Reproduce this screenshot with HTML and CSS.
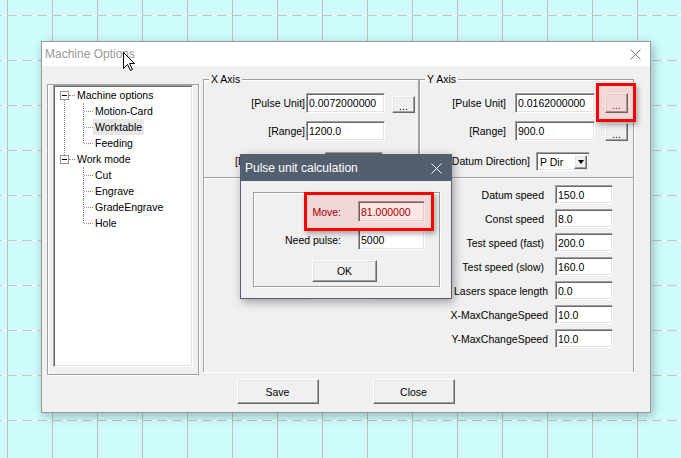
FILE: index.html
```html
<!DOCTYPE html>
<html lang="en">
<head>
    <meta charset="UTF-8">
    <title>Machine Options</title>
    <link rel="stylesheet" href="styles.css">
</head>
<body>
<div class="desktop">
    <svg class="grid" width="681" height="458">
        <defs>
            <pattern id="cell" x="7" y="15" width="45" height="45" patternUnits="userSpaceOnUse">
                <rect width="45" height="45" fill="#cefcfc"/>
                <line x1="0" y1="0.5" x2="45" y2="0.5" stroke="#ffffff"/>
                <line x1="0" y1="0.5" x2="45" y2="0.5" stroke="#c4c4c4" stroke-dasharray="10 5"/>
                <line x1="0.5" y1="0" x2="0.5" y2="45" stroke="#c0c0c0"/>
            </pattern>
        </defs>
        <rect width="681" height="458" fill="url(#cell)"/>
    </svg>

    <!-- main dialog -->
    <div class="window options">
        <div class="caption">
            <span class="caption_text">Machine Options</span>
            <svg class="caption_close" width="11" height="11"><path d="M0.5 0.5 L10.5 10.5 M10.5 0.5 L0.5 10.5"/></svg>
        </div>
        <div class="client">
            <div class="panes">
                <div class="tree_frame">
                    <div class="tree">
                        <div class="node node_open">
                            <div class="row"><span class="twisty"></span><span class="stub"></span><span class="label">Machine options</span></div>
                            <div class="row"><span class="branch"></span><span class="label">Motion-Card</span></div>
                            <div class="row"><span class="branch"></span><span class="label sel">Worktable</span></div>
                            <div class="row"><span class="branch branch_last"></span><span class="label">Feeding</span></div>
                        </div>
                        <div class="node">
                            <div class="row"><span class="twisty"></span><span class="stub"></span><span class="label">Work mode</span></div>
                            <div class="row"><span class="branch"></span><span class="label">Cut</span></div>
                            <div class="row"><span class="branch"></span><span class="label">Engrave</span></div>
                            <div class="row"><span class="branch"></span><span class="label">GradeEngrave</span></div>
                            <div class="row"><span class="branch branch_last"></span><span class="label">Hole</span></div>
                        </div>
                    </div>
                </div>

                <div class="settings">
                    <div class="group axis axis_x">
                        <div class="legend">X Axis</div>
                        <div class="field first">
                            <span class="lbl">[Pulse Unit]</span>
                            <span class="edit">0.0072000000</span>
                            <span class="btn dots">...</span>
                        </div>
                        <div class="field second">
                            <span class="lbl">[Range]</span>
                            <span class="edit">1200.0</span>
                        </div>
                        <div class="field third">
                            <span class="lbl_clip">[Datum Direction]</span>
                            <span class="combo"><span class="combo_text"></span><span class="btn combo_btn"><i class="arrow"></i></span></span>
                        </div>
                    </div>
                    <div class="group axis axis_y">
                        <div class="legend">Y Axis</div>
                        <div class="field first">
                            <span class="lbl">[Pulse Unit]</span>
                            <span class="edit">0.0162000000</span>
                            <span class="btn dots hl_text">...</span>
                        </div>
                        <div class="field second">
                            <span class="lbl">[Range]</span>
                            <span class="edit">900.0</span>
                            <span class="btn dots">...</span>
                        </div>
                        <div class="field third">
                            <span class="lbl">[Datum Direction]</span>
                            <span class="combo"><span class="combo_text">P Dir</span><span class="btn combo_btn"><i class="arrow"></i></span></span>
                        </div>
                    </div>
                    <div class="group speeds">
                        <div class="speeds_left">
                            <span class="edit"></span>
                        </div>
                        <div class="speeds_right">
                            <span class="lbl">Datum speed</span><span class="edit">150.0</span>
                            <span class="lbl">Const speed</span><span class="edit">8.0</span>
                            <span class="lbl">Test speed (fast)</span><span class="edit">200.0</span>
                            <span class="lbl">Test speed (slow)</span><span class="edit">160.0</span>
                            <span class="lbl wide">Lasers space length</span><span class="edit">0.0</span>
                            <span class="lbl wide">X-MaxChangeSpeed</span><span class="edit">10.0</span>
                            <span class="lbl wide">Y-MaxChangeSpeed</span><span class="edit">10.0</span>
                        </div>
                    </div>
                </div>
            </div>
            <div class="actions">
                <span class="btn push">Save</span>
                <span class="btn push">Close</span>
            </div>
        </div>
        <div class="mark mark_y"></div>
    </div>

    <!-- pulse unit calculation -->
    <div class="window calc">
        <div class="calc_caption">
            <span>Pulse unit calculation</span>
            <svg class="calc_close" width="11" height="11"><path d="M0.5 0.5 L10.5 10.5 M10.5 0.5 L0.5 10.5"/></svg>
        </div>
        <div class="calc_body">
            <div class="calc_frame">
                <div class="calc_row">
                    <span class="lbl hl_text">Move:</span>
                    <span class="edit hl_text">81.000000</span>
                </div>
                <div class="calc_row second">
                    <span class="lbl">Need pulse:</span>
                    <span class="edit">5000</span>
                </div>
                <span class="btn ok">OK</span>
            </div>
        </div>
        <div class="mark mark_move"></div>
    </div>

    <svg class="cursor" width="13" height="20"><path d="M0.5 0.5 V16.5 L4.5 12.5 L7.5 18.5 L9.5 17.5 L6.5 11.5 H11.5 Z"/></svg>
</div>
</body>
</html>
```

FILE: styles.css
```css
*{
    margin: 0;
    padding: 0;
    box-sizing: border-box;
}
body{
    width: 681px;
    height: 458px;
    overflow: hidden;
    font-family: "Liberation Sans", Arial, sans-serif;
    font-size: 10.5px;
    color: #000;
}
.desktop{
    position: relative;
    width: 681px;
    height: 458px;
}
.grid{
    display: block;
}

/* windows */
.window{
    position: absolute;
    background: #f0f0f0;
}
.options{
    left: 41px;
    top: 41px;
    width: 610px;
    height: 372px;
    border: 1px solid #9a9a9a;
    box-shadow: 2px 3px 10px rgba(0,0,0,0.28);
}
.caption{
    height: 24px;
    background: #fff;
    display: flex;
    align-items: center;
    justify-content: space-between;
    padding: 0 9px 0 3px;
}
.caption_text{
    font-size: 12px;
    color: #999;
}
.caption_close path{
    stroke: #777;
    fill: none;
}
.client{
    height: 346px;
    padding: 13px 15px 0 5px;
}
.panes{
    display: flex;
    align-items: flex-start;
}

/* tree */
.tree_frame{
    width: 152px;
    height: 291px;
    margin-top: 5px;
    border: 1px solid #a0a0a0;
    box-shadow: inset 1px 1px #fff, 1px 1px #fff;
    padding: 0 5px 7px 5px;
}
.tree{
    height: 100%;
    background: #fff;
    border: 1px solid;
    border-color: #a0a0a0 #fff #fff #a0a0a0;
    box-shadow: inset 1px 1px #696969, inset -1px -1px #e3e3e3;
    padding: 1px 0 0 1px;
}
.node{
    position: relative;
}
.node_open::before{
    content: "";
    position: absolute;
    left: 9px;
    top: 8px;
    height: 64px;
    border-left: 1px dotted #888;
}
.row{
    height: 16px;
    display: flex;
    align-items: center;
}
.twisty{
    width: 9px;
    height: 9px;
    margin-left: 5px;
    border: 1px solid #919191;
    background: #fff;
    position: relative;
    z-index: 1;
}
.twisty::after{
    content: "";
    position: absolute;
    left: 1px;
    top: 3px;
    width: 5px;
    height: 1px;
    background: #000;
}
.stub{
    width: 6px;
    border-top: 1px dotted #888;
}
.label{
    line-height: 16px;
    padding: 0 2px;
    white-space: nowrap;
}
.label.sel{
    background: #e8e8e8;
}
.branch{
    width: 10px;
    height: 16px;
    margin-left: 28px;
    position: relative;
}
.branch::before{
    content: "";
    position: absolute;
    left: 0;
    top: 0;
    height: 16px;
    border-left: 1px dotted #888;
}
.branch_last::before{
    height: 8px;
}
.branch::after{
    content: "";
    position: absolute;
    left: 1px;
    top: 8px;
    width: 9px;
    border-top: 1px dotted #888;
}

/* settings groups */
.settings{
    margin-left: 4px;
    width: 431px;
    display: grid;
    grid-template-columns: 216px 215px;
}
.group{
    border: 1px solid #a0a0a0;
    box-shadow: inset 1px 1px #fff, 1px 1px #fff;
}
.axis{
    height: 98px;
    border-bottom: 0;
}
.speeds{
    grid-column: 1 / 3;
    height: 195px;
    border-bottom: 0;
    display: flex;
    padding: 7px 20px 0 0;
}
.legend{
    width: max-content;
    height: 13px;
    line-height: 13px;
    margin: -7px 0 0 5px;
    padding: 0 2px;
    background: #f0f0f0;
}
.field{
    display: flex;
    align-items: center;
    height: 20px;
}
.field.first{
    margin-top: 7px;
}
.field.second{
    margin-top: 8px;
}
.field.third{
    margin-top: 10px;
}
.lbl{
    text-align: right;
    white-space: nowrap;
}
/* label that sits under the calculation dialog: only its first glyph shows */
.lbl_clip{
    width: 36px;
    padding-left: 31px;
    overflow: hidden;
    white-space: nowrap;
    margin-right: 85px;
}
.edit{
    display: flex;
    align-items: center;
    height: 20px;
    background: #fff;
    border: 1px solid;
    border-color: #a0a0a0 #fff #fff #a0a0a0;
    box-shadow: inset 1px 1px #696969, inset -1px -1px #e3e3e3;
    padding: 0 2px;
    white-space: nowrap;
}
.btn{
    display: flex;
    align-items: center;
    justify-content: center;
    background: #f0f0f0;
    border: 1px solid;
    border-color: #fff #696969 #696969 #fff;
    box-shadow: inset -1px -1px #a0a0a0, inset 1px 1px #e3e3e3;
}
.dots{
    width: 23px;
    height: 20px;
    padding-top: 3px;
}
.axis_x .lbl{
    width: 101px;
}
.axis_x .edit{
    margin-left: 1px;
    width: 79px;
}
.axis_x .dots{
    margin-left: 7px;
    height: 17px;
    align-self: flex-end;
}
.axis_x .combo{
    width: 58px;
}
.axis_y .lbl{
    width: 86px;
}
.axis_y .edit{
    margin-left: 9px;
    width: 80px;
}
.axis_y .dots{
    margin-left: 10px;
}
.axis_y .second .dots{
    height: 18px;
    align-self: flex-end;
}
.axis_y .third .lbl{
    width: 110px;
}
.axis_y .combo{
    margin-left: 6px;
    width: 54px;
}
.combo{
    display: flex;
    height: 19px;
    background: #fff;
    border: 1px solid;
    border-color: #a0a0a0 #fff #fff #a0a0a0;
    box-shadow: inset 1px 1px #696969, inset -1px -1px #e3e3e3;
    padding: 2px 2px 1px 2px;
}
.combo_text{
    flex: 1;
    line-height: 14px;
    padding-left: 1px;
}
.combo_btn{
    width: 13px;
}
.arrow{
    width: 0;
    height: 0;
    border-left: 3.5px solid transparent;
    border-right: 3.5px solid transparent;
    border-top: 4px solid #000;
}
.speeds_left{
    width: 166px;
    padding: 96px 0 0 107px;
}
.speeds_left .edit{
    width: 59px;
    height: 19px;
}
.speeds_right{
    margin-left: auto;
    display: grid;
    grid-template-columns: auto 58px;
    grid-auto-rows: 19px;
    column-gap: 11px;
    row-gap: 5px;
    align-items: center;
}
.speeds_right .edit{
    height: 19px;
}
.speeds_right .lbl.wide{
    margin-right: -4px;
}
.actions{
    display: flex;
    justify-content: center;
    gap: 54px;
    margin-top: 4px;
    padding-left: 9px;
}
.push{
    width: 82px;
    height: 25px;
}

/* calculation dialog */
.calc{
    left: 240px;
    top: 154px;
    width: 212px;
    height: 145px;
    border: 1px solid #535f6f;
    box-shadow: 2px 3px 9px rgba(0,0,0,0.35);
}
.calc_caption{
    height: 26px;
    background: #535f6f;
    color: #fff;
    font-size: 12px;
    display: flex;
    align-items: center;
    justify-content: space-between;
    padding: 0 9px 0 4px;
}
.calc_close path{
    stroke: #fff;
    fill: none;
}
.calc_body{
    padding: 11px 11px 0 12px;
}
.calc_frame{
    width: 187px;
    height: 95px;
    border: 1px solid #a0a0a0;
    box-shadow: inset 1px 1px #fff, 1px 1px #fff;
    padding-top: 8px;
}
.calc_row{
    display: flex;
    align-items: center;
    height: 21px;
}
.calc_row.second{
    margin-top: 7px;
}
.calc_row .lbl{
    width: 87px;
}
.calc_row .edit{
    margin-left: 17px;
    width: 67px;
    height: 21px;
}
.ok{
    width: 65px;
    height: 22px;
    margin: 10px 0 0 58px;
}

/* red annotations */
.mark{
    position: absolute;
    border: 3px solid #f00;
    background: rgba(255,0,0,0.1);
    box-shadow: 2px 3px 5px rgba(0,0,0,0.3);
}
.mark_y{
    left: 554px;
    top: 41px;
    width: 40px;
    height: 39px;
}
.mark_move{
    left: 63px;
    top: 37px;
    width: 130px;
    height: 39px;
}
.hl_text{
    color: #9a0000;
}

.cursor{
    position: absolute;
    left: 123px;
    top: 52px;
}
.cursor path{
    fill: #fff;
    stroke: #000;
}
```
